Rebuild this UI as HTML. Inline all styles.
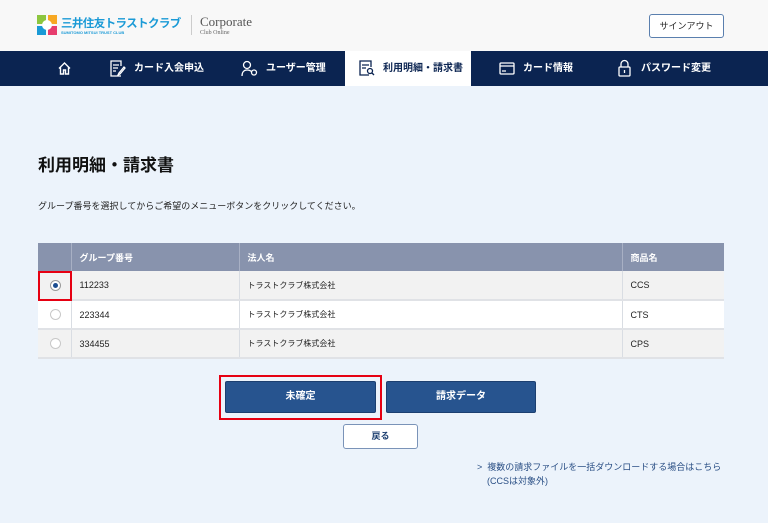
<!DOCTYPE html>
<html><head><meta charset="utf-8"><style>
*{margin:0;padding:0;box-sizing:border-box}
body{width:768px;height:523px;background:#ecf3fb;font-family:"Liberation Sans","Noto Sans CJK JP",sans-serif;position:relative;overflow:hidden;color:#222}
.hdr{position:absolute;left:0;top:0;width:768px;height:51px;background:#f8f8f8}
.nav{position:absolute;left:0;top:51px;width:768px;height:35px;background:#0b2451}
.tab{position:absolute;top:0;height:35px;line-height:35px;color:#fff;font-size:10px;font-weight:bold;white-space:nowrap}
.abs{position:absolute}
table{position:absolute;left:38px;top:243px;width:686px;border-collapse:collapse;font-size:9px}
td,th{border-right:1px solid #d9dde3;text-align:left;padding-left:8px}
th{background:#8893ad;color:#fff;height:28px;font-weight:bold;border-right:1px solid #a8b0c4}
tr.r td{height:29px;border-bottom:2px solid #e0e2e6}
.radio{display:inline-block;width:11px;height:11px;border-radius:50%;border:1px solid #c8c8c8;background:#fff;margin-left:4px;position:relative;vertical-align:middle}
.btn{position:absolute;background:#27548f;color:#fff;font-size:10px;font-weight:bold;text-align:center;border:1px solid #1c3f70;border-radius:2px}
</style></head><body>
<div class="hdr">
 <svg class="abs" style="left:37px;top:15px" width="20" height="20" viewBox="0 0 20 20">
  <rect x="0" y="0" width="9" height="9" fill="#8dc63f"/><rect x="11" y="0" width="9" height="9" fill="#f7a823"/>
  <rect x="0" y="11" width="9" height="9" fill="#1a9ad6"/><rect x="11" y="11" width="9" height="9" fill="#e73d6e"/>
  <circle cx="10" cy="10" r="5" fill="#fff"/></svg>
 <div class="abs" style="left:61px;top:15px;font-size:11.5px;font-weight:bold;color:#1a9ad6;letter-spacing:-0.6px;white-space:nowrap">三井住友トラストクラブ</div>
 <div class="abs" style="left:61px;top:30px;font-size:4px;color:#1a9ad6;font-weight:bold;white-space:nowrap">SUMITOMO MITSUI TRUST CLUB</div>
 <div class="abs" style="left:191px;top:15px;width:1px;height:20px;background:#ccc"></div>
 <div class="abs" style="left:200px;top:14px;font-family:'Liberation Serif',serif;font-size:13px;color:#555">Corporate</div>
 <div class="abs" style="left:200px;top:30px;font-family:'Liberation Serif',serif;font-size:6px;color:#666">Club Online</div>
 <div class="abs" style="left:649px;top:14px;width:75px;height:24px;border:1px solid #5a7fae;border-radius:3px;background:#fff;font-size:9px;text-align:center;line-height:22px;color:#222">サインアウト</div>
</div>
<div class="nav">
 <svg class="abs" style="left:57px;top:10px" width="15" height="15" viewBox="0 0 15 15" fill="none" stroke="#fff" stroke-width="1.4"><path d="M2 7.5L7.5 2L13 7.5M3.5 6v7h3v-4h2v4h3V6"/></svg>
 <svg class="abs" style="left:110px;top:9px" width="16" height="17" viewBox="0 0 16 17" fill="none" stroke="#fff" stroke-width="1.3"><path d="M11 6V1H1v15h10M3 5h6M3 8h5M3 11h3M14 7l-5 6-1 2 2-1 5-6z"/></svg>
 <div class="tab" style="left:134px">カード入会申込</div>
 <svg class="abs" style="left:241px;top:9px" width="18" height="17" viewBox="0 0 18 17" fill="none" stroke="#fff" stroke-width="1.3"><circle cx="6" cy="5" r="3.5"/><path d="M1 16c0-4 2-6 5-6s4 1 5 2"/><circle cx="13" cy="12.5" r="2.5"/></svg>
 <div class="tab" style="left:266px">ユーザー管理</div>
 <div class="abs" style="left:345px;top:0;width:126px;height:35px;background:#fff"></div>
 <svg class="abs" style="left:359px;top:9px" width="16" height="17" viewBox="0 0 16 17" fill="none" stroke="#0b2451" stroke-width="1.3"><path d="M10 15H1V1h11v6M3 5h7M3 8h4"/><circle cx="11" cy="11" r="2.5"/><path d="M13 13l2 2"/></svg>
 <div class="tab" style="left:383px;color:#0b2451">利用明細・請求書</div>
 <svg class="abs" style="left:499px;top:11px" width="16" height="13" viewBox="0 0 16 13" fill="none" stroke="#fff" stroke-width="1.3"><rect x="1" y="1" width="14" height="11" rx="1"/><path d="M1 4h14M3 9h4"/></svg>
 <div class="tab" style="left:523px">カード情報</div>
 <svg class="abs" style="left:618px;top:8px" width="13" height="18" viewBox="0 0 13 18" fill="none" stroke="#fff" stroke-width="1.3"><path d="M3 8V5a3.5 3.5 0 017 0v3"/><rect x="1" y="8" width="11" height="9" rx="1"/><path d="M6.5 11v3"/></svg>
 <div class="tab" style="left:641px">パスワード変更</div>
</div>
<div class="abs" style="left:38px;top:151px;font-size:17px;font-weight:bold;color:#111">利用明細・請求書</div>
<div class="abs" style="left:38px;top:199px;font-size:9px;color:#222">グループ番号を選択してからご希望のメニューボタンをクリックしてください。</div>
<table>
<tr><th style="width:33px"></th><th style="width:168px">グループ番号</th><th style="width:383px">法人名</th><th style="border-right:none">商品名</th></tr>
<tr class="r" style="background:#f2f2f2"><td><span class="radio" style="border-color:#999"><span style="position:absolute;left:2px;top:2px;width:5px;height:5px;border-radius:50%;background:#1c4d90"></span></span></td><td>112233</td><td style="font-size:8px">トラストクラブ株式会社</td><td style="border-right:none">CCS</td></tr>
<tr class="r" style="background:#fff"><td><span class="radio"></span></td><td>223344</td><td style="font-size:8px">トラストクラブ株式会社</td><td style="border-right:none">CTS</td></tr>
<tr class="r" style="background:#f2f2f2"><td><span class="radio"></span></td><td>334455</td><td style="font-size:8px">トラストクラブ株式会社</td><td style="border-right:none">CPS</td></tr>
</table>
<div class="abs" style="left:38px;top:271px;width:34px;height:30px;border:2px solid #e60012"></div>
<div class="abs" style="left:219px;top:375px;width:163px;height:45px;border:2px solid #e60012"></div>
<div class="btn" style="left:225px;top:381px;width:151px;height:32px;line-height:30px">未確定</div>
<div class="btn" style="left:386px;top:381px;width:150px;height:32px;line-height:30px">請求データ</div>
<div class="abs" style="left:343px;top:424px;width:75px;height:25px;border:1px solid #7a93b8;border-radius:3px;background:#fff;font-size:9px;font-weight:bold;text-align:center;line-height:23px;color:#1c3f70">戻る</div>
<div class="abs" style="left:477px;top:460px;font-size:9px;color:#2a4f85;line-height:14px">&gt;&nbsp;&nbsp;複数の請求ファイルを一括ダウンロードする場合はこちら<br>&nbsp;&nbsp;&nbsp;&nbsp;(CCSは対象外)</div>
</body></html>
